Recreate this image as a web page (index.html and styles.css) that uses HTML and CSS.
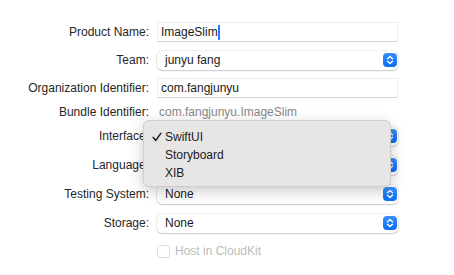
FILE: index.html
```html
<!DOCTYPE html>
<html lang="en">
<head>
    <meta charset="UTF-8">
    <meta name="viewport" content="width=device-width, initial-scale=1.0">
    <title>New Project Options</title>
    <link rel="stylesheet" href="styles.css">
</head>
<body>
    <div class="sheet">
        <div class="form">
            <div class="row">
                <label class="label">Product Name:</label>
                <div class="field text-field">ImageSlim<span class="caret"></span></div>
            </div>
            <div class="row">
                <label class="label">Team:</label>
                <div class="field popup">
                    <span>junyu fang</span>
                    <span class="stepper"><svg viewBox="0 0 14 14" width="14" height="14"><path d="M4.5 5.8 7 3.5l2.5 2.3M4.5 8.2 7 10.5l2.5-2.3" fill="none" stroke="#fff" stroke-width="1.4" stroke-linecap="round" stroke-linejoin="round"/></svg></span>
                </div>
            </div>
            <div class="row">
                <label class="label">Organization Identifier:</label>
                <div class="field text-field">com.fangjunyu</div>
            </div>
            <div class="row row-compact">
                <label class="label">Bundle Identifier:</label>
                <div class="field plain">com.fangjunyu.ImageSlim</div>
            </div>
            <!-- popup values under the open menu are hidden -->
            <div class="row row-compact">
                <label class="label">Interface:</label>
                <div class="field popup">
                    <span></span>
                    <span class="stepper"><svg viewBox="0 0 14 14" width="14" height="14"><path d="M4.5 5.8 7 3.5l2.5 2.3M4.5 8.2 7 10.5l2.5-2.3" fill="none" stroke="#fff" stroke-width="1.4" stroke-linecap="round" stroke-linejoin="round"/></svg></span>
                </div>
            </div>
            <div class="row row-wide">
                <label class="label">Language:</label>
                <div class="field popup">
                    <span></span>
                    <span class="stepper"><svg viewBox="0 0 14 14" width="14" height="14"><path d="M4.5 5.8 7 3.5l2.5 2.3M4.5 8.2 7 10.5l2.5-2.3" fill="none" stroke="#fff" stroke-width="1.4" stroke-linecap="round" stroke-linejoin="round"/></svg></span>
                </div>
            </div>
            <div class="row row-wide">
                <label class="label">Testing System:</label>
                <div class="field popup">
                    <span>None</span>
                    <span class="stepper"><svg viewBox="0 0 14 14" width="14" height="14"><path d="M4.5 5.8 7 3.5l2.5 2.3M4.5 8.2 7 10.5l2.5-2.3" fill="none" stroke="#fff" stroke-width="1.4" stroke-linecap="round" stroke-linejoin="round"/></svg></span>
                </div>
            </div>
            <div class="row row-wide">
                <label class="label">Storage:</label>
                <div class="field popup">
                    <span>None</span>
                    <span class="stepper"><svg viewBox="0 0 14 14" width="14" height="14"><path d="M4.5 5.8 7 3.5l2.5 2.3M4.5 8.2 7 10.5l2.5-2.3" fill="none" stroke="#fff" stroke-width="1.4" stroke-linecap="round" stroke-linejoin="round"/></svg></span>
                </div>
            </div>
            <div class="row">
                <span class="label"></span>
                <div class="field check disabled">
                    <span class="checkbox"></span>
                    <span>Host in CloudKit</span>
                </div>
            </div>

            <ul class="menu">
                <li class="menu-item selected">
                    <span class="tick"><svg viewBox="0 0 10 10" width="10" height="10"><path d="M1.2 5.4 3.8 8.4 8.8 1.4" fill="none" stroke="#1c1c1c" stroke-width="1.5" stroke-linecap="round" stroke-linejoin="round"/></svg></span>SwiftUI
                </li>
                <li class="menu-item"><span class="tick"></span>Storyboard</li>
                <li class="menu-item"><span class="tick"></span>XIB</li>
            </ul>
        </div>
    </div>
</body>
</html>
```

FILE: styles.css
```css
body {
    margin: 0;
    background: #fff;
    font-family: "Liberation Sans", Arial, sans-serif;
    font-size: 12px;
    color: #262626;
}
.sheet {
    width: 454px;
    height: 275px;
    overflow: hidden;
}
.form {
    position: relative;
    display: flex;
    flex-direction: column;
    gap: 8px;
    padding-top: 22px;
}
.row {
    display: flex;
    align-items: center;
    height: 20px;
}
.row-compact {
    margin-top: -4px;
}
.row-wide {
    margin-top: 1px;
}
.label {
    width: 149px;
    padding-right: 8px;
    text-align: right;
    white-space: nowrap;
    flex: none;
}
.field {
    width: 241px;
    box-sizing: border-box;
    display: flex;
    align-items: center;
    white-space: nowrap;
}
.text-field {
    height: 20px;
    padding-left: 3px;
    color: #1a1a1a;
    background: #fff;
    border: 1px solid #ececec;
    border-bottom-color: #d4d4d4;
}
.caret {
    display: inline-block;
    width: 2px;
    height: 15px;
    margin-left: 0;
    background: #2d7cf6;
}
.popup {
    height: 19px;
    padding: 0 1px 0 8px;
    justify-content: space-between;
    color: #1a1a1a;
    background: #fff;
    border-radius: 5px;
    box-shadow: 0 0 0 0.5px rgba(0, 0, 0, 0.12), 0 1px 1.5px rgba(0, 0, 0, 0.16);
}
.stepper {
    display: flex;
    width: 14px;
    height: 14px;
    border-radius: 4px;
    background: linear-gradient(#3a8ffd, #0a6cf5);
}
.plain {
    padding-left: 2px;
    color: #878787;
}
.check {
    gap: 5px;
}
.checkbox {
    width: 11px;
    height: 11px;
    border: 1px solid #dedede;
    border-radius: 3px;
    background: #fff;
}
.disabled {
    color: #bcbcbc;
}
.menu {
    position: absolute;
    left: 143px;
    top: 120px;
    width: 248px;
    box-sizing: border-box;
    margin: 0;
    padding: 7px 0 4px;
    list-style: none;
    background: #e7e6e5;
    border: 1px solid #cfcecd;
    border-radius: 6px;
    box-shadow: 0 4px 14px rgba(0, 0, 0, 0.22);
    color: #1c1c1c;
}
.menu-item {
    display: flex;
    align-items: center;
    height: 18px;
}
.tick {
    display: flex;
    align-items: center;
    width: 21px;
    padding-left: 8px;
    box-sizing: border-box;
}
```
